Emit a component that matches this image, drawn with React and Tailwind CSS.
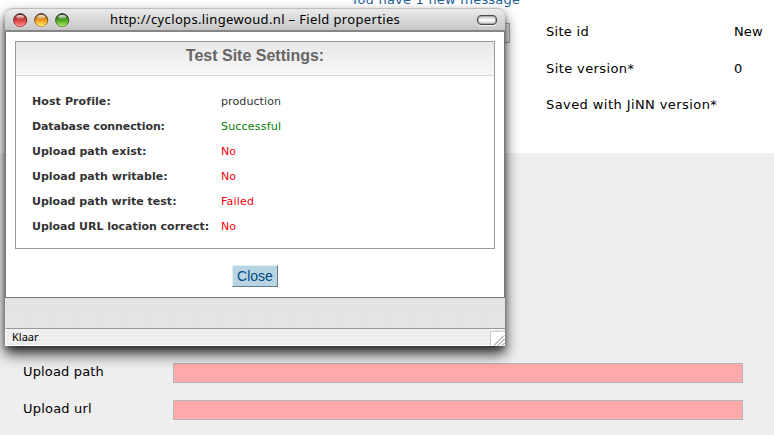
import React from "react";

const rows = [
  ["Host Profile:", "production", "text-[#333] tracking-[0.1px]", "tracking-[0.1px]"],
  ["Database connection:", "Successful", "text-[#008000] tracking-[0.2px]", "tracking-[-0.1px]"],
  ["Upload path exist:", "No", "text-[#f5000c]", "tracking-[0.03px]"],
  ["Upload path writable:", "No", "text-[#f5000c]", "tracking-[0.03px]"],
  ["Upload path write test:", "Failed", "text-[#f5000c] tracking-[0.2px]", "tracking-[0.01px]"],
  ["Upload URL location correct:", "No", "text-[#f5000c]", "tracking-[-0.02px]"],
];

const lights = [
  { id: "close", dark: "#7c1517", mid: "#d8403f", glow: "#ff9d98" },
  { id: "minimise", dark: "#8d4a10", mid: "#f09a1c", glow: "#fff67c" },
  { id: "zoom", dark: "#1d4f12", mid: "#4da51f", glow: "#b9f070" },
];

function Light({ id, dark, mid, glow }) {
  return (
    <svg width="15" height="15" viewBox="0 0 15 15">
      <defs>
        <linearGradient id={id + "-body"} x1="0" y1="0" x2="0" y2="1">
          <stop offset="0" stopColor={dark} />
          <stop offset="0.5" stopColor={mid} />
          <stop offset="1" stopColor={glow} />
        </linearGradient>
        <linearGradient id={id + "-shine"} x1="0" y1="0" x2="0" y2="1">
          <stop offset="0" stopColor="#fff" stopOpacity="0.95" />
          <stop offset="1" stopColor="#fff" stopOpacity="0.15" />
        </linearGradient>
        <linearGradient id={id + "-rim"} x1="0" y1="0" x2="0" y2="1">
          <stop offset="0" stopColor="#222" />
          <stop offset="1" stopColor={dark} stopOpacity="0.6" />
        </linearGradient>
      </defs>
      <circle cx="7.2" cy="8" r="7" fill="#fff" opacity="0.6" />
      <circle cx="7.2" cy="7.3" r="6.6" fill={"url(#" + id + "-body)"} stroke={"url(#" + id + "-rim)"} />
      <ellipse cx="7.2" cy="3.9" rx="4" ry="2" fill={"url(#" + id + "-shine)"} />
    </svg>
  );
}

function PopupWindow() {
  return (
    <div className="absolute left-[5px] top-[8px] flex h-[338px] w-[500px] flex-col rounded-t-[7px] shadow-[0_8px_14px_0_rgba(0,0,0,0.8),0_3px_5px_0_rgba(0,0,0,0.25)]">
      <div className="flex h-[24px] shrink-0 items-start rounded-t-[7px] border-b-2 border-[#868686] bg-linear-to-b from-[#ededed] to-[#c6c6c6] pl-[8px] shadow-[inset_0_1px_0_#bdbdbd]">
        <div className="flex gap-[6px] pt-[5px]">
          {lights.map((l) => (
            <Light key={l.id} {...l} />
          ))}
        </div>
        <div className="ml-[40px] w-[292px] whitespace-nowrap font-['Noto_Sans',sans-serif] text-[13px] leading-[22px] tracking-[0.35px] text-black">
          http://cyclops.lingewoud.nl – Field properties
        </div>
        <div className="ml-auto mr-[8px] mt-[7px] h-[10px] w-[20px] rounded-[4px] border border-[#4a4a4a] bg-linear-to-b from-[#bbb] via-white to-[#ccc] shadow-[inset_0_0_0_1px_#aaa,0_1px_0_#f4f4f4]" />
      </div>
      <div className="flex h-[266px] shrink-0 flex-col items-center border-x border-b border-[#777] bg-white pt-[9px]">
        <div className="h-[208px] w-[480px] border border-[#999] bg-white">
          <div className="h-[34px] border-b border-[#d8d8d8] bg-linear-to-b from-[#e7e7e7] to-[#f8f8f8] text-center font-['Liberation_Sans',Arial,sans-serif] text-[16px] font-bold leading-[28px] text-[#666]">
            Test Site Settings:
          </div>
          <div className="pl-[16px] pt-[13px] font-['DejaVu_Sans',sans-serif] text-[11px] leading-[25px]">
            {rows.map(([label, value, valueStyle, labelStyle]) => (
              <div key={label} className="flex h-[25px] whitespace-nowrap">
                <div className={"w-[189px] font-bold text-[#333] " + labelStyle}>{label}</div>
                <div className={valueStyle}>{value}</div>
              </div>
            ))}
          </div>
        </div>
        <button className="mt-[16px] h-[22px] w-[46px] border border-b-[#667b87] border-l-[#e4f0f6] border-r-[#667b87] border-t-[#e4f0f6] bg-[#b8d4e3] font-['Liberation_Sans',Arial,sans-serif] text-[14px] leading-[20px] text-[#004a80]">
          Close
        </button>
      </div>
      <div className="h-[30px] shrink-0 bg-[#e1e1e1] bg-[repeating-linear-gradient(0deg,rgba(255,255,255,0.15)_0_1px,transparent_1px_3px),repeating-linear-gradient(90deg,rgba(255,255,255,0.15)_0_1px,transparent_1px_3px)]" />
      <div className="flex h-[18px] shrink-0 justify-between border-b border-l border-t border-b-white border-l-white border-t-[#999] bg-[repeating-linear-gradient(180deg,#f1f1f1_0_2px,#ebebeb_2px_4px)]">
        <div className="pl-[6px] font-['Noto_Sans',sans-serif] text-[11px] leading-[16px] text-black">Klaar</div>
        <div className="mt-[2px] -mb-px h-[15px] w-[15px] border-l border-t border-[#ccc] bg-white">
          <svg width="14" height="14" viewBox="0 0 14 14" fill="none" stroke="#777" strokeWidth="1">
            <path d="M3 13.5L13 3.5M7 13.5L13.5 7M11 13.5L13.5 11" />
          </svg>
        </div>
      </div>
    </div>
  );
}

export default function App() {
  return (
    <div className="relative flex h-[435px] w-[774px] flex-col overflow-hidden bg-white font-['DejaVu_Sans',sans-serif] text-[13px] text-black">
      <div className="flex h-[153px] shrink-0 pr-[11px]">
        <div className="flex w-[546px] shrink-0 flex-col">
          <div className="-mt-[8px] h-[16px] whitespace-nowrap pl-[351px] leading-[16px] tracking-[0.22px] text-[#1e6298]">You have 1 new message</div>
          <div className="ml-[300px] mt-[15px] h-[20px] w-[210px] border border-[#aaa] bg-[#eee]" />
        </div>
        <div className="grid grid-cols-[188px_auto] grid-rows-[37px_36px_37px] whitespace-nowrap pt-[22px] leading-[20px]">
          <div className="tracking-[0.3px]">Site id</div>
          <div className="tracking-[0.1px]">New</div>
          <div className="tracking-[0.4px]">Site version*</div>
          <div>0</div>
          <div className="w-[180px] tracking-[0.42px]">Saved with JiNN version*</div>
        </div>
      </div>
      <div className="flex flex-1 flex-col gap-[17px] bg-[#eee] pl-[23px] pt-[210px]">
        <div className="flex h-[20px]">
          <div className="w-[150px] leading-[18px] tracking-[0.15px]">Upload path</div>
          <div className="h-[20px] w-[570px] border border-[#b5b5b5] bg-[#ffaaaa]" />
        </div>
        <div className="flex h-[20px]">
          <div className="w-[150px] leading-[18px] tracking-[0.2px]">Upload url</div>
          <div className="h-[20px] w-[570px] border border-[#b5b5b5] bg-[#ffaaaa]" />
        </div>
      </div>
      <PopupWindow />
    </div>
  );
}
